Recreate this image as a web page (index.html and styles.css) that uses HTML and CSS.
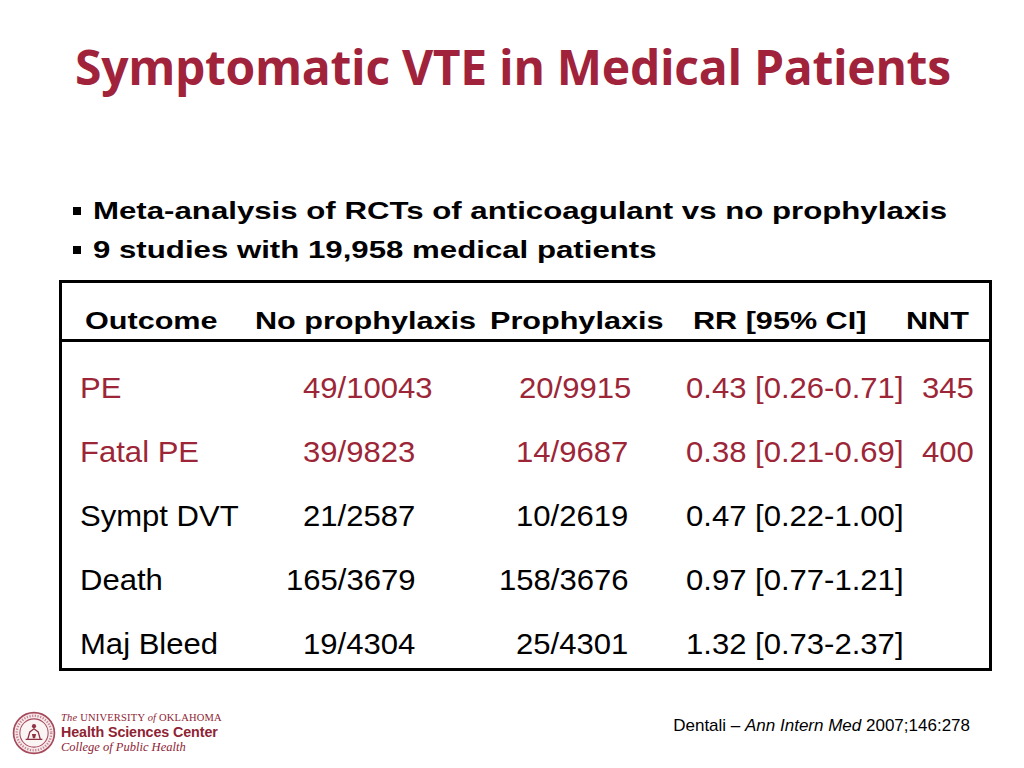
FILE: index.html
```html
<!DOCTYPE html>
<html>
<head>
<meta charset="utf-8">
<link rel="stylesheet" href="styles.css">
</head>
<body>
<div class="slide">
  <h1 class="title">Symptomatic VTE in Medical Patients</h1>
  <ul class="bullets">
    <li><span class="stretch">Meta-analysis of RCTs of anticoagulant vs no prophylaxis</span></li>
    <li><span class="stretch">9 studies with 19,958 medical patients</span></li>
  </ul>
  <div class="table">
    <div class="thead">
      <span class="th"><span class="stretch">Outcome</span></span>
      <span class="th"><span class="stretch">No prophylaxis</span></span>
      <span class="th"><span class="stretch">Prophylaxis</span></span>
      <span class="th"><span class="stretch">RR [95% CI]</span></span>
      <span class="th"><span class="stretch">NNT</span></span>
    </div>
    <div class="tbody">
      <div class="row red">
        <span class="td">PE</span><span class="td">49/10043</span><span class="td nudge">20/9915</span><span class="td">0.43 [0.26-0.71]</span><span class="td">345</span>
      </div>
      <div class="row red">
        <span class="td">Fatal PE</span><span class="td">39/9823</span><span class="td">14/9687</span><span class="td">0.38 [0.21-0.69]</span><span class="td">400</span>
      </div>
      <div class="row">
        <span class="td">Sympt DVT</span><span class="td">21/2587</span><span class="td">10/2619</span><span class="td">0.47 [0.22-1.00]</span><span class="td"></span>
      </div>
      <div class="row">
        <span class="td">Death</span><span class="td wide">165/3679</span><span class="td wide">158/3676</span><span class="td">0.97 [0.77-1.21]</span><span class="td"></span>
      </div>
      <div class="row">
        <span class="td">Maj Bleed</span><span class="td">19/4304</span><span class="td">25/4301</span><span class="td">1.32 [0.73-2.37]</span><span class="td"></span>
      </div>
    </div>
  </div>
  <footer class="footer">
    <div class="logo">
      <svg class="seal" width="44" height="44" viewBox="0 0 42 42">
        <circle cx="21" cy="21" r="19.5" fill="#f6e9eb" stroke="#a54a5b" stroke-width="1.6"/>
        <circle cx="21" cy="21" r="13.5" fill="#fbf4f5" stroke="#a54a5b" stroke-width="1"/>
        <circle cx="21" cy="21" r="16.5" fill="none" stroke="#c48490" stroke-width="2.2" stroke-dasharray="1.2 1.4"/>
        <path d="M13 27 L29 27 M15 27 L17 20 L21 17 L25 20 L27 27" fill="none" stroke="#8e3344" stroke-width="1.2"/>
        <circle cx="21" cy="14.5" r="2" fill="#8e3344"/>
        <path d="M19 22 L23 22 L22 26 L20 26 Z" fill="#8e3344"/>
      </svg>
      <div class="logo-text">
        <div class="l1"><i>The</i> UNIVERSITY <i>of</i> OKLAHOMA</div>
        <div class="l2">Health Sciences Center</div>
        <div class="l3">College of Public Health</div>
      </div>
    </div>
    <p class="cite">Dentali – <i>Ann Intern Med</i> 2007;146:278</p>
  </footer>
</div>
</body>
</html>
```
FILE: styles.css
```css
html, body {
  margin: 0;
  padding: 0;
  background: #ffffff;
}
.slide {
  width: 1024px;
  height: 768px;
  display: flex;
  flex-direction: column;
  font-family: "Liberation Sans", Arial, sans-serif;
  color: #000;
  overflow: hidden;
}
.title {
  margin: 0;
  padding: 37px 0 0 75px;
  font-family: "Open Sans", sans-serif;
  font-weight: 700;
  font-size: 48px;
  line-height: 60px;
  color: #a0233b;
  letter-spacing: -0.3px;
  white-space: nowrap;
}
.stretch {
  display: inline-block;
  transform: scaleX(1.3);
  transform-origin: left center;
  white-space: nowrap;
}
.bullets {
  list-style: none;
  margin: 94px 0 0 0;
  padding: 0 0 0 73px;
}
.bullets li {
  display: flex;
  align-items: center;
  height: 39px;
  font-size: 24px;
  font-weight: 700;
  line-height: 39px;
}
.bullets li::before {
  content: "";
  width: 8px;
  height: 8px;
  background: #000;
  margin-right: 12px;
  flex: none;
}
.table {
  margin: 11px 0 0 59px;
  width: 927px;
  border: 3px solid #000;
}
.thead {
  display: grid;
  grid-template-columns: 170px 235px 203px 213px 1fr;
  padding: 23px 0 3px 23px;
  border-bottom: 3px solid #000;
  font-size: 23px;
  font-weight: 700;
  line-height: 30px;
}
.thead .stretch {
  transform: scaleX(1.33);
}
.tbody {
  display: flex;
  flex-direction: column;
  gap: 30px;
  padding: 29px 0 7px 18px;
}
.row {
  display: grid;
  grid-template-columns: 223px 213px 170px 236px 1fr;
  font-size: 30px;
  line-height: 34px;
  white-space: nowrap;
}
.td {
  display: inline-block;
  transform: scaleX(1.035);
  transform-origin: left center;
}
.row.red {
  color: #9c2637;
}
.row .wide {
  margin-left: -17px;
}
.row .nudge {
  margin-left: 3px;
}
.footer {
  display: flex;
  justify-content: space-between;
  align-items: flex-start;
  margin-top: 34px;
  padding: 0 54px 0 12px;
}
.logo {
  display: flex;
  align-items: center;
  gap: 5px;
  height: 56px;
}
.seal {
  flex: none;
}
.logo-text {
  display: flex;
  flex-direction: column;
  color: #8e2334;
  white-space: nowrap;
}
.l1 {
  font-family: "Liberation Serif", serif;
  font-size: 10.5px;
  line-height: 12px;
  letter-spacing: 0.2px;
}
.l2 {
  font-family: "Liberation Sans", Arial, sans-serif;
  font-weight: 700;
  font-size: 14.3px;
  line-height: 16px;
  letter-spacing: -0.1px;
}
.l3 {
  font-family: "Liberation Serif", serif;
  font-style: italic;
  font-size: 12.5px;
  line-height: 15px;
}
.cite {
  margin: 0;
  padding-top: 11px;
  font-size: 17px;
  line-height: 20px;
  white-space: nowrap;
}
```
